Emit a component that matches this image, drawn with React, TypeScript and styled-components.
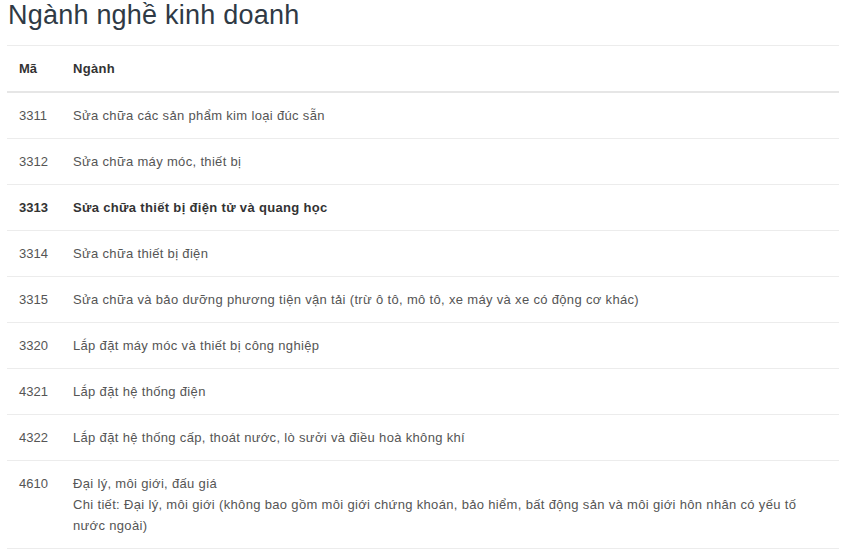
import React from "react";
import styled, { createGlobalStyle } from "styled-components";

const Global = createGlobalStyle`
  html, body { margin: 0; padding: 0; background: #fff; }
  body { font-family: "Liberation Sans", Arial, sans-serif; }
`;

const Page = styled.div`
  padding: 0 7px;
`;

const Title = styled.h2`
  margin: 0 0 15px 1px;
  font-size: 27px;
  line-height: 30px;
  font-weight: 400;
  letter-spacing: 0.22px;
  color: #2f3a45;
`;

const Table = styled.table`
  width: 100%;
  border-collapse: collapse;
  font-size: 13px;
  line-height: 21px;
  color: #555;
`;

const Th = styled.th<{ $w?: number; $wide?: boolean }>`
  text-align: left;
  font-weight: 700;
  color: #333;
  padding: 12px;
  border-top: 1px solid #ececec;
  border-bottom: 2px solid #e6e6e6;
  width: ${(p) => (p.$w ? `${p.$w}px` : "auto")};
  letter-spacing: ${(p) => (p.$wide ? "0.3px" : "0")};
  box-sizing: border-box;
`;

const Td = styled.td<{ $bold?: boolean; $wide?: boolean }>`
  padding: 12px;
  border-top: 1px solid #ececec;
  vertical-align: top;
  font-weight: ${(p) => (p.$bold ? 700 : 400)};
  color: ${(p) => (p.$bold ? "#333" : "#555")};
  letter-spacing: ${(p) => (p.$wide ? "0.33px" : "0")};
`;

const Row = styled.tr`
  &:last-child td { border-bottom: 1px solid #ececec; }
`;

type Item = { code: string; lines: string[]; bold?: boolean };

const items: Item[] = [
  { code: "3311", lines: ["Sửa chữa các sản phẩm kim loại đúc sẵn"] },
  { code: "3312", lines: ["Sửa chữa máy móc, thiết bị"] },
  { code: "3313", lines: ["Sửa chữa thiết bị điện tử và quang học"], bold: true },
  { code: "3314", lines: ["Sửa chữa thiết bị điện"] },
  {
    code: "3315",
    lines: ["Sửa chữa và bảo dưỡng phương tiện vận tải (trừ ô tô, mô tô, xe máy và xe có động cơ khác)"],
  },
  { code: "3320", lines: ["Lắp đặt máy móc và thiết bị công nghiệp"] },
  { code: "4321", lines: ["Lắp đặt hệ thống điện"] },
  { code: "4322", lines: ["Lắp đặt hệ thống cấp, thoát nước, lò sưởi và điều hoà không khí"] },
  {
    code: "4610",
    lines: [
      "Đại lý, môi giới, đấu giá",
      "Chi tiết: Đại lý, môi giới (không bao gồm môi giới chứng khoán, bảo hiểm, bất động sản và môi giới hôn nhân có yếu tố nước ngoài)",
    ],
  },
];

const Line = styled.div``;

export default function App() {
  return (
    <>
      <Global />
      <Page>
        <Title>Ngành nghề kinh doanh</Title>
        <Table>
          <thead>
            <tr>
              <Th $w={54}>Mã</Th>
              <Th $wide>Ngành</Th>
            </tr>
          </thead>
          <tbody>
            {items.map((it) => (
              <Row key={it.code}>
                <Td $bold={it.bold}>{it.code}</Td>
                <Td $bold={it.bold} $wide>
                  {it.lines.map((l, i) => (
                    <Line key={i}>{l}</Line>
                  ))}
                </Td>
              </Row>
            ))}
          </tbody>
        </Table>
      </Page>
    </>
  );
}
